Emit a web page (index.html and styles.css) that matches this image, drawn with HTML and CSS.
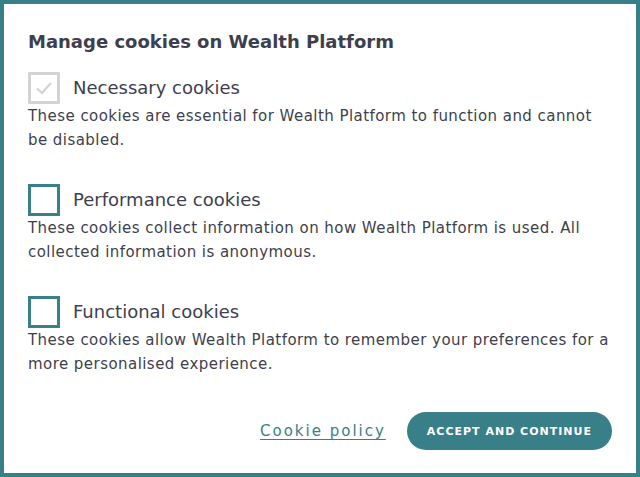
FILE: index.html
```html
<!DOCTYPE html>
<html lang="en">
<head>
  <meta charset="UTF-8">
  <title>Manage cookies</title>
  <link rel="stylesheet" href="styles.css">
</head>
<body>
  <div class="dialog">
    <h2 class="title">Manage cookies on Wealth Platform</h2>

    <div class="option">
      <div class="option-head">
        <span class="check check-disabled">
          <svg width="20" height="20" viewBox="0 0 20 20"><path d="M3 10.5 L8 15 L17 5" fill="none" stroke="#d3d3d3" stroke-width="2.2"/></svg>
        </span>
        <span class="option-label">Necessary cookies</span>
      </div>
      <p class="option-text">These cookies are essential for Wealth Platform to function and cannot be disabled.</p>
    </div>

    <div class="option">
      <div class="option-head">
        <span class="check"></span>
        <span class="option-label">Performance cookies</span>
      </div>
      <p class="option-text">These cookies collect information on how Wealth Platform is used. All collected information is anonymous.</p>
    </div>

    <div class="option">
      <div class="option-head">
        <span class="check"></span>
        <span class="option-label">Functional cookies</span>
      </div>
      <p class="option-text">These cookies allow Wealth Platform to remember your preferences for a more personalised experience.</p>
    </div>

    <div class="actions">
      <a class="policy" href="#">Cookie policy</a>
      <button class="accept">ACCEPT AND CONTINUE</button>
    </div>
  </div>
</body>
</html>
```

FILE: styles.css
```css
body {
  margin: 0;
  font-family: "DejaVu Sans", Arial, sans-serif;
  color: #3e3f4c;
  background: #fff;
}

.dialog {
  box-sizing: border-box;
  width: 640px;
  height: 477px;
  border: 4px solid #387f87;
  padding: 25px 24px 0 24px;
  display: flex;
  flex-direction: column;
}

.title {
  margin: 0 0 17px 0;
  font-size: 18px;
  line-height: 26px;
  font-weight: 600;
}

.option {
  margin-bottom: 32px;
}

.option-head {
  display: flex;
  align-items: center;
  gap: 13px;
}

.check {
  box-sizing: border-box;
  width: 32px;
  height: 32px;
  border: 3px solid #387f87;
  display: flex;
  align-items: center;
  justify-content: center;
}

.check-disabled {
  border-color: #d3d3d3;
}

.option-label {
  font-size: 18px;
  line-height: 32px;
}

.option-text {
  margin: 0;
  font-size: 15px;
  line-height: 24px;
  letter-spacing: 0.45px;
}

.actions {
  display: flex;
  justify-content: flex-end;
  align-items: center;
  gap: 21px;
  margin-top: auto;
  margin-bottom: 23px;
}

.policy {
  color: #387f87;
  font-size: 15px;
  letter-spacing: 2px;
  text-underline-offset: 3px;
}

.accept {
  height: 38px;
  padding: 0 20px;
  border: none;
  border-radius: 19px;
  background: #387f87;
  color: #fff;
  font-family: inherit;
  font-size: 11px;
  font-weight: 600;
  letter-spacing: 1px;
}
```
